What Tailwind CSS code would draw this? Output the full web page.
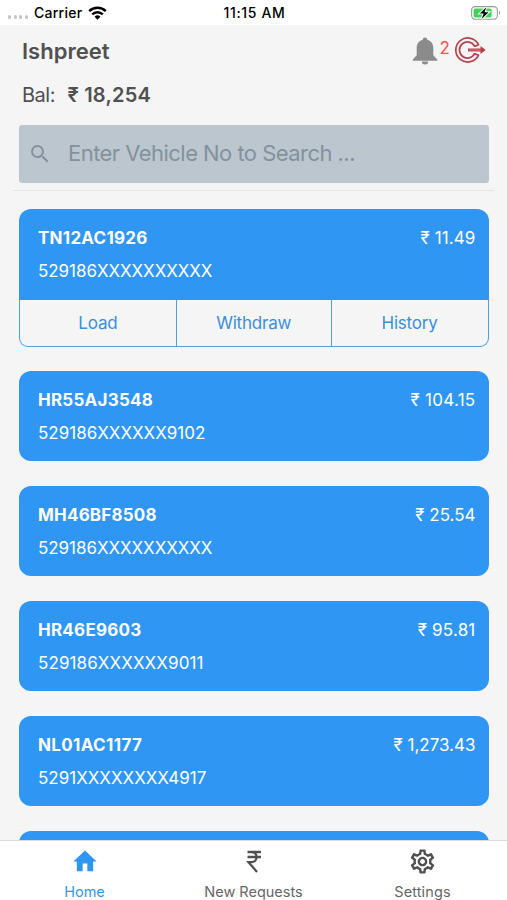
<!DOCTYPE html>
<html lang="en">
<head>
<meta charset="utf-8">
<title>Vehicle cards</title>
<script src="https://cdn.jsdelivr.net/npm/@tailwindcss/browser@4"></script>
</head>
<body class="w-[507px] h-[900px] overflow-hidden bg-[#f5f5f5] font-['Inter','Noto_Sans',sans-serif] text-[#505050] flex flex-col">
  <div class="h-[25px] shrink-0 bg-white text-black grid grid-cols-3 items-center pl-2 pr-1.5 text-[14px] font-medium leading-[26px]">
    <div class="flex items-center">
      <div class="flex gap-[2.4px] w-[26px] pt-[8px]">
        <i class="size-[3.2px] rounded-full bg-[#c4c4c4]"></i><i class="size-[3.2px] rounded-full bg-[#c4c4c4]"></i><i class="size-[3.2px] rounded-full bg-[#c4c4c4]"></i><i class="size-[3.2px] rounded-full bg-[#c4c4c4]"></i>
      </div>
      <span class="w-[54px] tracking-[0.25px]">Carrier</span>
      <svg class="w-[19px] h-[14px]" viewBox="0 0 19 14" fill="none" stroke="#000" stroke-width="2.4"><path d="M1.2 5.2a11.8 11.8 0 0 1 16.6 0M4.2 8.4a7.5 7.5 0 0 1 10.6 0"/><path d="M6.6 10.7a4.1 4.1 0 0 1 5.8 0L9.500 13.700z" fill="#000" stroke="none"/></svg>
    </div>
    <span class="text-center whitespace-nowrap tracking-[0.65px]">11:15 AM</span>
    <svg class="justify-self-end w-[30px] h-[16px]" viewBox="0 0 30 16"><rect x=".6" y="1.600" width="25.800" height="12.600" rx="3.600" fill="#fff" stroke="#999" stroke-width="1.100"/><rect x="2.600" y="3.500" width="18" height="9" rx="1.800" fill="#3fd45c"/><path d="M28 5.800q2 2 0 4.200z" fill="#888"/><path d="M15.200 2.200 8.800 8.500h3.800l-2 5.600 7-6.800h-4z" fill="#000" stroke="#fff" stroke-width="2" paint-order="stroke"/></svg>
  </div>
  <header class="h-[165.500px] shrink-0 mx-[13px] border-b-[1.500px] border-[#e4e4e4] pl-[6px] pr-[5.500px] flex flex-col">
    <div class="h-[52px] flex items-center justify-between pl-[3px] pr-[2.500px]">
      <h1 class="text-[22px] font-semibold">Ishpreet</h1>
      <div class="flex items-center pb-[2px]">
        <svg class="w-[26px] h-[28px] mt-[1px]" viewBox="0 0 26 28" fill="#8b8b8b"><path d="M13 .6c-1.300 0-2.200.9-2.200 2.200C6.800 3.900 4.700 7.200 4.700 11v7.200L.8 22.400v1.300h24.400v-1.300l-3.900-4.200V11c0-3.800-2.100-7.100-6.100-8.200C15.200 1.500 14.300.6 13 .6zM9.800 24.600a3.200 3 0 0 0 6.400 0z"/></svg>
        <span class="w-[16px] pr-[2.500px] text-center text-[17px] leading-5 text-[#f9534f] pb-[4px]">2</span>
        <svg class="w-[32px] h-[28px]" viewBox="0 0 32 28" fill="none" stroke="#b7404f" stroke-width="1.700"><path d="M24.600 8.800A12 12 0 1 0 24.600 19.200L20.600 17.600A8 8 0 1 1 20.600 10.400Z" stroke-linejoin="round"/><path d="M18 14H29" stroke="#f5f5f5" stroke-width="6"/><path d="M14 14H28" stroke-width="3"/><path d="M15 14H28" stroke="#e0a4ab" stroke-width=".6"/><path d="M26.500 10v8l5.200-4z" fill="#b7404f" stroke="none"/></svg>
      </div>
    </div>
    <p class="h-[35px] pl-[3px] flex items-center text-[20px]"><span class="w-[45.500px] tracking-[-0.5px]">Bal:</span><b class="font-semibold tracking-[0.2px]">₹ 18,254</b></p>
    <div class="mt-[12.500px] h-[58.500px] rounded-[3px] bg-[#bbc6cf] text-[#84919b] flex items-center pl-[9px]">
      <svg class="size-[24px]" viewBox="0 0 24 24" fill="#84919b"><path d="M15.500 14h-.79l-.28-.27A6.471 6.471 0 0 0 16 9.500 6.500 6.500 0 1 0 9.500 16c1.610 0 3.090-.59 4.230-1.570l.27.28v.79l5 4.990L20.490 19l-4.990-5zm-6 0C7.010 14 5 11.990 5 9.500S7.010 5 9.500 5 14 7.010 14 9.500 11.990 14 9.500 14z"/></svg>
      <span class="pl-[16px] text-[22px] tracking-[-0.54px]">Enter Vehicle No to Search ...</span>
    </div>
  </header>
  <main class="flex-1 min-h-0 overflow-hidden pl-[19px] pr-[18.500px] pt-[18.500px] flex flex-col gap-[24.8px] text-[17px] leading-[24px]">
    <section class="h-[137.600px] shrink-0 rounded-[12px] bg-[#3096f3] flex flex-col text-white">
      <div class="h-[91px] pl-[19px] pr-[13px] pt-[17px]">
        <div class="flex justify-between"><b class="font-bold tracking-[0.25px]">TN12AC1926</b><span class="tracking-[0.1px]">₹ 11.49</span></div>
        <div class="mt-[9px] tracking-[-0.05px]">529186XXXXXXXXXX</div>
      </div>
      <div class="flex-1 grid grid-cols-3 rounded-b-[9px] border-[1.500px] border-t-0 border-[#4aa1e8] bg-[#f5f5f5] text-[#3a8fdb] text-center leading-[46px] tracking-[-0.2px]">
        <span>Load</span><span class="border-x border-[#4aa1e8]">Withdraw</span><span>History</span>
      </div>
    </section>
    <section class="h-[90px] shrink-0 rounded-[12px] bg-[#3096f3] text-white pl-[19px] pr-[13px] pt-[17px]">
      <div class="flex justify-between"><b class="font-bold tracking-[0.25px]">HR55AJ3548</b><span class="tracking-[0.3px]">₹ 104.15</span></div>
      <div class="mt-[9px]">529186XXXXXX9102</div>
    </section>
    <section class="h-[90px] shrink-0 rounded-[12px] bg-[#3096f3] text-white pl-[19px] pr-[13px] pt-[17px]">
      <div class="flex justify-between"><b class="font-bold tracking-[0.2px]">MH46BF8508</b><span>₹ 25.54</span></div>
      <div class="mt-[9px] tracking-[-0.05px]">529186XXXXXXXXXX</div>
    </section>
    <section class="h-[90px] shrink-0 rounded-[12px] bg-[#3096f3] text-white pl-[19px] pr-[13px] pt-[17px]">
      <div class="flex justify-between"><b class="font-bold tracking-[0.25px]">HR46E9603</b><span class="tracking-[0.2px]">₹ 95.81</span></div>
      <div class="mt-[9px] tracking-[0.1px]">529186XXXXXX9011</div>
    </section>
    <section class="h-[90px] shrink-0 rounded-[12px] bg-[#3096f3] text-white pl-[19px] pr-[13px] pt-[17px]">
      <div class="flex justify-between"><b class="font-bold tracking-[0.35px]">NL01AC1177</b><span>₹ 1,273.43</span></div>
      <div class="mt-[9px]">5291XXXXXXXX4917</div>
    </section>
    <section class="h-[90px] shrink-0 rounded-[12px] bg-[#3096f3]"></section>
  </main>
  <nav class="h-[60px] shrink-0 bg-white border-t border-[#dcdcdc] grid grid-cols-3 text-[14.500px] leading-5 text-[#666]">
    <div class="flex flex-col items-center pt-[6px] text-[#3096f3]">
      <svg class="size-[28px]" viewBox="0 0 24 24" fill="#3096f3"><path d="M10 20.700v-6.500h4v6.500h5v-8.300h3L12 3 2 12.400h3v8.300z"/></svg>
      <span class="mt-[7px]">Home</span>
    </div>
    <div class="flex flex-col items-center pt-[6px]">
      <svg class="size-[28px]" viewBox="0 0 28 28" fill="none" stroke="#505050" stroke-width="2.300"><path d="M7.500 5h13.500M7.500 10h13.500M7.500 5h4c6.800 0 6.800 10.200 0 10.200H8.500l8.500 9.800"/></svg>
      <span class="mt-[7px]">New Requests</span>
    </div>
    <div class="flex flex-col items-center pt-[6px]">
      <svg class="size-[29px] -mb-px" viewBox="0 0 24 24" fill="#505050"><path d="M19.430 12.980c.04-.32.07-.64.07-.98 0-.34-.03-.66-.07-.98l2.110-1.650c.19-.15.24-.42.12-.64l-2-3.460c-.09-.16-.26-.25-.44-.25-.06 0-.12.01-.17.03l-2.490 1c-.52-.4-1.080-.73-1.690-.98l-.38-2.650C14.460 2.180 14.250 2 14 2h-4c-.25 0-.46.18-.49.42l-.38 2.650c-.61.25-1.170.59-1.690.98l-2.490-1c-.06-.02-.12-.03-.18-.03-.17 0-.34.09-.43.25l-2 3.460c-.13.22-.07.49.12.64l2.110 1.650c-.04.32-.07.65-.07.98 0 .33.03.66.07.98l-2.110 1.650c-.19.15-.24.42-.12.64l2 3.460c.09.16.26.25.44.25.06 0 .12-.01.17-.03l2.490-1c.52.4 1.080.73 1.690.98l.38 2.650c.03.24.24.42.49.42h4c.25 0 .46-.18.49-.42l.38-2.650c.61-.25 1.170-.59 1.690-.98l2.490 1c.06.02.12.03.18.03.17 0 .34-.09.43-.25l2-3.460c.12-.22.07-.49-.12-.64l-2.110-1.650zm-1.980-1.710c.04.31.05.52.05.73 0 .21-.02.43-.05.73l-.14 1.130.89.7 1.080.84-.7 1.210-1.270-.51-1.040-.42-.9.68c-.43.32-.84.56-1.250.73l-1.060.43-.16 1.130-.2 1.350h-1.400l-.19-1.350-.16-1.130-1.060-.43c-.43-.18-.83-.41-1.230-.71l-.91-.7-1.060.43-1.270.51-.7-1.210 1.080-.84.89-.7-.14-1.130c-.03-.31-.05-.54-.05-.74s.02-.43.05-.73l.14-1.130-.89-.7-1.080-.84.7-1.210 1.270.51 1.040.42.9-.68c.43-.32.84-.56 1.250-.73l1.060-.43.16-1.130.2-1.350h1.390l.19 1.350.16 1.130 1.060.43c.43.18.83.41 1.230.71l.91.7 1.060-.43 1.270-.51.7 1.210-1.070.85-.89.7.14 1.130zM12 8c-2.210 0-4 1.790-4 4s1.790 4 4 4 4-1.790 4-4-1.790-4-4-4zm0 6c-1.100 0-2-.9-2-2s.9-2 2-2 2 .9 2 2-.9 2-2 2z"/></svg>
      <span class="mt-[7px] tracking-[0.1px]">Settings</span>
    </div>
  </nav>
</body>
</html>
